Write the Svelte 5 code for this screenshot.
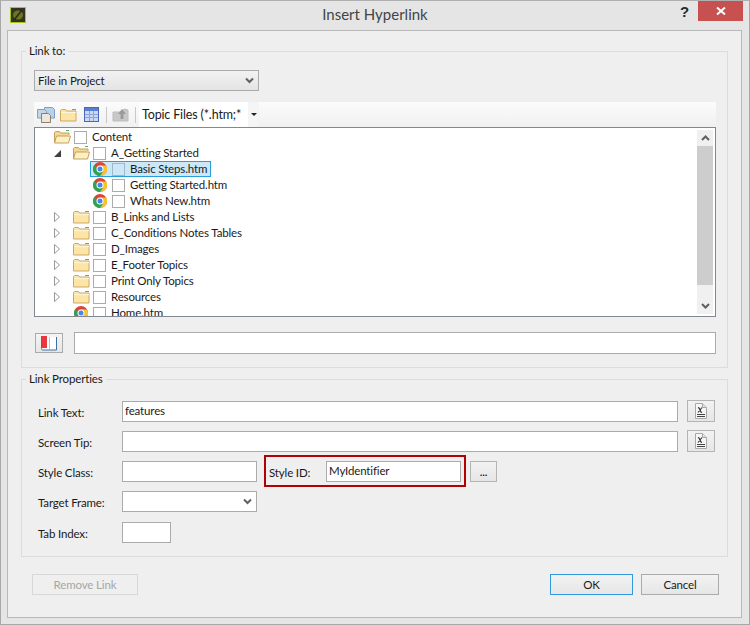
<script>
  const rows = [
    { level: 0, icon: 'open', label: 'Content' },
    { level: 1, exp: 'down', icon: 'open', label: 'A_Getting Started' },
    { level: 2, icon: 'chrome', label: 'Basic Steps.htm', selected: true },
    { level: 2, icon: 'chrome', label: 'Getting Started.htm' },
    { level: 2, icon: 'chrome', label: 'Whats New.htm' },
    { level: 1, exp: 'right', icon: 'folder', label: 'B_Links and Lists' },
    { level: 1, exp: 'right', icon: 'folder', label: 'C_Conditions Notes Tables' },
    { level: 1, exp: 'right', icon: 'folder', label: 'D_Images' },
    { level: 1, exp: 'right', icon: 'folder', label: 'E_Footer Topics' },
    { level: 1, exp: 'right', icon: 'folder', label: 'Print Only Topics' },
    { level: 1, exp: 'right', icon: 'folder', label: 'Resources' },
    { level: 1, icon: 'chrome', label: 'Home.htm' }
  ];
</script>

{#snippet chevron()}
  <svg class="chev" width="9" height="7" viewBox="0 0 9 7"><path d="M1 1.500 4.500 5 8 1.500" fill="none" stroke="#606060" stroke-width="2"/></svg>
{/snippet}

{#snippet folder()}
  <svg width="17" height="14" viewBox="0 0 17 14">
    <path d="M.5 13V2.500l1-1h4l1 1.500h9.500v10z" fill="#fbe6a8" stroke="#cfa95e"/>
    <path d="M1 4.500h15" stroke="#fff6d8"/>
    <path d="M12 1.500h4" stroke="#5fa8a0"/>
  </svg>
{/snippet}

{#snippet openFolder()}
  <svg width="17" height="14" viewBox="0 0 17 14">
    <path d="M.5 13V2.500l1-1h4l1 1.500h8.500v2" fill="#f3d894" stroke="#c59f5c"/>
    <path d="M.5 13 2.500 6h14l-2 7z" fill="#fdf0c4" stroke="#c59f5c"/>
    <path d="M12 .5h3" stroke="#4fae7c"/>
  </svg>
{/snippet}

{#snippet chrome()}
  <svg class="chrome" width="14" height="14" viewBox="0 0 14 14">
    <circle cx="7" cy="7" r="7" fill="#dc4437"/>
    <path d="M7 7 1 3.500A7 7 0 0 0 7 14l3-4z" fill="#2fa350"/>
    <path d="M7 3.500h6.100A7 7 0 0 1 7 14l3-4z" fill="#f7c528"/>
    <circle cx="7" cy="7" r="3.500" fill="#fff"/>
    <circle cx="7" cy="7" r="2.500" fill="#4a86e8"/>
  </svg>
{/snippet}

{#snippet docX()}
  <svg width="12" height="16" viewBox="0 0 12 16">
    <path d="M.5.5h7l4 4v11H.5z" fill="#f6f6f6" stroke="#a8a8a8"/>
    <path d="M7.500.5v4h4" fill="#e0e0e0" stroke="#a8a8a8"/>
    <path d="M3 4.500l1 .5 2 4 1 .5M7 4.500 3 9.500" fill="none" stroke="#333" stroke-width="1.200"/>
    <path d="M2 11.500h8M2 13.500h8" stroke="#444"/>
  </svg>
{/snippet}

<div class="window">
  <header class="titlebar">
    <svg class="logo" width="16" height="16" viewBox="0 0 16 16">
      <rect x=".5" y=".5" width="15" height="15" fill="#35351f" stroke="#a6c51e"/>
      <ellipse cx="8" cy="8" rx="5" ry="4.500" fill="#6d7426"/>
      <path d="M4 13 12 3" stroke="#2a2a18" stroke-width="1.500"/>
    </svg>
    <h1>Insert Hyperlink</h1>
    <span class="help">?</span>
    <div class="close">
      <svg width="10" height="8" viewBox="0 0 10 8"><path d="M1 .5 9 7.500M9 .5 1 7.500" stroke="#fff" stroke-width="2"/></svg>
    </div>
  </header>

  <main class="panel">
    <fieldset class="link-to">
      <legend>Link to:</legend>
      <div class="select top-select">
        <span>File in Project</span>
        {@render chevron()}
      </div>

      <div class="toolbar">
        <svg class="tool copy" width="18" height="16" viewBox="0 0 18 16">
          <path d="M7.500.5h8l2 2V11h-10z" fill="#b9d2ea" stroke="#7f9fbe"/>
          <path d="M.5 2.500h7l2 2V11H.5z" fill="#c5d6e6" stroke="#7f9fbe"/>
          <path d="M4.500 6.500h7l2 2v7h-9z" fill="#efe7da" stroke="#8a7f72"/>
        </svg>
        <span class="tool">{@render folder()}</span>
        <svg class="tool grid" width="15" height="15" viewBox="0 0 15 15">
          <rect x=".5" y=".5" width="14" height="14" fill="#c9d9f5" stroke="#4a66b8"/>
          <rect x="1" y="1" width="13" height="3" fill="#5a7ed0"/>
          <path d="M1 7.500h13M1 10.500h13M5.500 4v10M9.500 4v10" stroke="#8aa4dc"/>
        </svg>
        <i class="sep"></i>
        <svg class="tool up" width="17" height="15" viewBox="0 0 17 15">
          <path d="M1 5h9l2-3 4 1v11H1z" fill="#c8c8c8" stroke="#bdbdbd"/>
          <path d="M10 2l4 5h-2.500v5h-3V7H6z" fill="#9a9a9a"/>
        </svg>
        <i class="sep"></i>
        <div class="combo">
          <span>Topic Files (*.htm;*.html)</span>
        </div>
        <div class="combo-btn"><i></i></div>
      </div>

      <div class="tree">
        <div class="nodes">
          {#each rows as row}
            <div class="node" style="padding-left: {row.level * 19}px">
              <span class="exp">
                {#if row.exp === 'down'}
                  <svg width="7" height="7" viewBox="0 0 7 7"><path d="M7 0v7H0z" fill="#404040"/></svg>
                {:else if row.exp === 'right'}
                  <svg width="6" height="10" viewBox="0 0 6 10"><path d="M.5.5 5.500 5 .5 9.500z" fill="#fff" stroke="#9a9a9a"/></svg>
                {/if}
              </span>
              <span class="icon">
                {#if row.icon === 'open'}
                  {@render openFolder()}
                {:else if row.icon === 'folder'}
                  {@render folder()}
                {:else}
                  {@render chrome()}
                {/if}
              </span>
              <span class="check" class:on={row.selected}></span>
              <span class="label">{row.label}</span>
              {#if row.selected}<span class="highlight"></span>{/if}
            </div>
          {/each}
        </div>
        <div class="scrollbar">
          <div class="arrow">
            <svg width="9" height="6" viewBox="0 0 9 6"><path d="M1 5 4.500 1.500 8 5" fill="none" stroke="#606060" stroke-width="2"/></svg>
          </div>
          <div class="thumb"></div>
          <div class="arrow">
            <svg width="9" height="6" viewBox="0 0 9 6"><path d="M1 1 4.500 4.500 8 1" fill="none" stroke="#606060" stroke-width="2"/></svg>
          </div>
        </div>
      </div>

      <div class="path-row">
        <button class="book" type="button">
          <svg width="16" height="15" viewBox="0 0 16 15">
            <path d="M.5 0v12.500c0 1 .5 1.500 1.500 1.500h13.500V1" fill="#fff" stroke="#3f6fa8"/>
            <path d="M8.500 1v12" stroke="#b8c4d4"/>
            <rect x="1" y="0" width="5" height="12" fill="#e8373f"/>
          </svg>
        </button>
        <input class="text path" />
      </div>
    </fieldset>

    <fieldset class="props">
      <legend>Link Properties</legend>
      <div class="prop">
        <label for="link-text">Link Text:</label>
        <input id="link-text" class="text grow" value="features" />
        <button class="doc" type="button">{@render docX()}</button>
      </div>
      <div class="prop">
        <label for="screen-tip">Screen Tip:</label>
        <input id="screen-tip" class="text grow" />
        <button class="doc" type="button">{@render docX()}</button>
      </div>
      <div class="prop">
        <label for="style-class">Style Class:</label>
        <input id="style-class" class="text short" />
        <div class="marked">
          <label for="style-id">Style ID:</label>
          <input id="style-id" class="text short" value="MyIdentifier" />
        </div>
        <button class="dots" type="button">...</button>
      </div>
      <div class="prop">
        <span class="lbl">Target Frame:</span>
        <div class="select frame">{@render chevron()}</div>
      </div>
      <div class="prop last">
        <label for="tab-index">Tab Index:</label>
        <input id="tab-index" class="text tiny" />
      </div>
    </fieldset>

    <footer class="actions">
      <button class="btn remove" type="button" disabled>Remove Link</button>
      <button class="btn ok" type="button">OK</button>
      <button class="btn cancel" type="button">Cancel</button>
    </footer>
  </main>
</div>

<style>
  :global(body) {
    margin: 0;
    background: #e5e5e5;
  }

  .window {
    box-sizing: border-box;
    width: 750px;
    height: 625px;
    display: flex;
    flex-direction: column;
    border: 1px solid #a8a8a8;
    border-top-color: #b0b0b0;
    background: #e5e5e5;
    font-family: "Lato", "Noto Sans", sans-serif;
    font-size: 11.5px;
    letter-spacing: -0.15px;
    color: #1a1a1a;
    overflow: hidden;
  }

  .titlebar {
    height: 29px;
    flex: none;
    display: flex;
    align-items: flex-start;
    position: relative;
  }

  .logo {
    margin: 6px 0 0 9px;
  }

  h1 {
    position: absolute;
    left: 0;
    right: 0;
    top: 3px;
    margin: 0;
    text-align: center;
    font-size: 15px;
    line-height: 20px;
    font-weight: 400;
    letter-spacing: 0;
    color: #444;
  }

  .help {
    margin: 2px 0 0 auto;
    font-size: 15px;
    line-height: 18px;
    font-weight: 700;
    color: #2a2a2a;
    font-family: "Liberation Sans", sans-serif;
  }

  .close {
    width: 45px;
    height: 20px;
    margin: 0 6px 0 9px;
    background: #c75050;
    display: flex;
    align-items: center;
    justify-content: center;
  }

  .panel {
    flex: 1;
    margin: 0 7px 6px 6px;
    padding: 12px 13px 0;
    border: 1px solid #b9b9b9;
    background: #efefef;
    display: flex;
    flex-direction: column;
  }

  fieldset {
    margin: 0;
    min-width: 0;
    border: 1px solid #dcdcdc;
  }

  legend {
    padding: 0 3px;
    line-height: 16px;
  }

  .link-to {
    height: 325px;
    box-sizing: border-box;
    padding: 11px 11px 0 12px;
  }

  .link-to legend {
    margin-left: -8px;
  }

  .select {
    box-sizing: border-box;
    height: 21px;
    display: flex;
    align-items: center;
    justify-content: space-between;
    padding: 0 4px 0 3px;
    border: 1px solid #ababab;
  }

  .top-select {
    width: 225px;
    background: linear-gradient(#f2f2f2, #e4e4e4);
  }

  .frame {
    width: 135px;
    background: #fff;
    justify-content: flex-end;
  }

  .toolbar {
    height: 25px;
    margin-top: 11px;
    display: flex;
    align-items: center;
    padding-left: 3px;
    background: linear-gradient(#fcfcfc, #f0f0f0);
  }

  .tool {
    display: flex;
    flex: none;
    margin-right: 7px;
  }

  .tool.copy {
    margin-right: 5px;
  }

  .tool.grid {
    margin-right: 7px;
  }

  .tool.up {
    margin-right: 6px;
  }

  .sep {
    width: 1px;
    height: 16px;
    flex: none;
    margin-right: 5px;
    background: #c8c8c8;
  }

  .sep:last-of-type {
    margin-right: 3px;
  }

  .combo {
    width: 109px;
    height: 25px;
    flex: none;
    box-sizing: border-box;
    padding-left: 3px;
    background: #fff;
    font-size: 12.5px;
    line-height: 26px;
    white-space: nowrap;
  }

  .combo span {
    display: block;
    width: 99px;
    overflow: hidden;
  }

  .combo-btn {
    width: 11px;
    height: 25px;
    display: flex;
    align-items: center;
    justify-content: center;
    background: #f5f5f5;
  }

  .combo-btn i {
    border: 3px solid transparent;
    border-top: 3px solid #222;
    border-bottom: 0;
  }

  .tree {
    box-sizing: border-box;
    height: 190px;
    display: flex;
    border: 1px solid #828790;
    background: #fff;
    overflow: hidden;
  }

  .nodes {
    flex: 1;
    padding-top: 1px;
    min-width: 0;
  }

  .node {
    position: relative;
    height: 16px;
    display: flex;
    align-items: center;
    white-space: nowrap;
  }

  .exp {
    width: 19px;
    flex: none;
    display: flex;
    align-items: center;
    justify-content: flex-start;
  }

  .icon {
    width: 20px;
    flex: none;
    display: flex;
    align-items: center;
    position: relative;
    z-index: 1;
  }

  .chrome {
    margin-left: 1px;
  }

  .check {
    box-sizing: border-box;
    width: 13px;
    height: 13px;
    margin-right: 5px;
    flex: none;
    background: #fff;
    border: 1px solid #ababab;
    position: relative;
    z-index: 1;
  }

  .check.on {
    background: #cce8f8;
    border-color: #9fb8c8;
  }

  .label {
    position: relative;
    z-index: 1;
    line-height: 16px;
  }

  .highlight {
    position: absolute;
    left: 55px;
    top: 0;
    width: 121px;
    height: 16px;
    box-sizing: border-box;
    background: #cce8f8;
    border: 1px solid #26a0da;
  }

  .scrollbar {
    width: 16px;
    margin: 2px 2px 2px 0;
    display: flex;
    flex-direction: column;
    flex: none;
    background: #f0f0f0;
  }

  .arrow {
    height: 16px;
    flex: none;
    display: flex;
    align-items: center;
    justify-content: center;
  }

  .thumb {
    height: 139px;
    background: #cdcdcd;
    margin-bottom: auto;
  }

  .path-row {
    margin-top: 15px;
    display: flex;
    align-items: center;
  }

  button {
    font: inherit;
    letter-spacing: inherit;
    padding: 0;
  }

  .book {
    width: 28px;
    height: 20px;
    margin: 0 11px 0 1px;
    display: flex;
    align-items: center;
    justify-content: center;
    border: 1px solid #ababab;
    background: linear-gradient(#f4f4f4, #e6e6e6);
  }

  .text {
    box-sizing: border-box;
    height: 21px;
    padding: 0 2px 2px;
    border: 1px solid #ababab;
    background: #fff;
    font: inherit;
    letter-spacing: inherit;
    color: inherit;
    outline: none;
  }

  .path {
    flex: 1;
    min-width: 0;
    height: 22px;
  }

  .props {
    height: 186px;
    box-sizing: border-box;
    margin-top: 3px;
    padding: 9px 12px 0 16px;
  }

  .props legend {
    margin-left: -12px;
  }

  .prop {
    height: 30px;
    display: flex;
    align-items: center;
  }

  .prop.last {
    margin-top: 1px;
  }

  label,
  .lbl {
    width: 84px;
    flex: none;
    padding-top: 3px;
  }

  .grow {
    flex: 1;
    min-width: 0;
    margin-right: 9px;
  }

  .doc {
    width: 28px;
    height: 22px;
    flex: none;
    display: flex;
    align-items: center;
    justify-content: center;
    border: 1px solid #b4b4b4;
    background: linear-gradient(#f2f2f2, #e6e6e6);
  }

  .short {
    width: 135px;
    flex: none;
  }

  .tiny {
    width: 49px;
    flex: none;
  }

  .marked {
    box-sizing: border-box;
    width: 202px;
    height: 32px;
    flex: none;
    margin: 0 4px 0 7px;
    padding: 0 3px;
    display: flex;
    align-items: center;
    border: 2px solid #b30000;
  }

  .marked label {
    width: 57px;
  }

  .dots {
    width: 27px;
    height: 21px;
    border: 1px solid #b4b4b4;
    background: linear-gradient(#f2f2f2, #e6e6e6);
    line-height: 20px;
  }

  .actions {
    margin-top: 17px;
    display: flex;
    gap: 8px;
    padding-left: 11px;
  }

  .btn {
    height: 21px;
    box-sizing: border-box;
    border: 1px solid #ababab;
    background: linear-gradient(#f2f2f2, #e6e6e6);
    color: #1a1a1a;
  }

  .remove {
    width: 106px;
    margin-right: 404px;
    border-color: #d8d8d8;
    background: #efefef;
    color: #a6a6a6;
  }

  .ok {
    width: 83px;
    border-color: #3399dd;
  }

  .cancel {
    width: 78px;
  }
</style>
